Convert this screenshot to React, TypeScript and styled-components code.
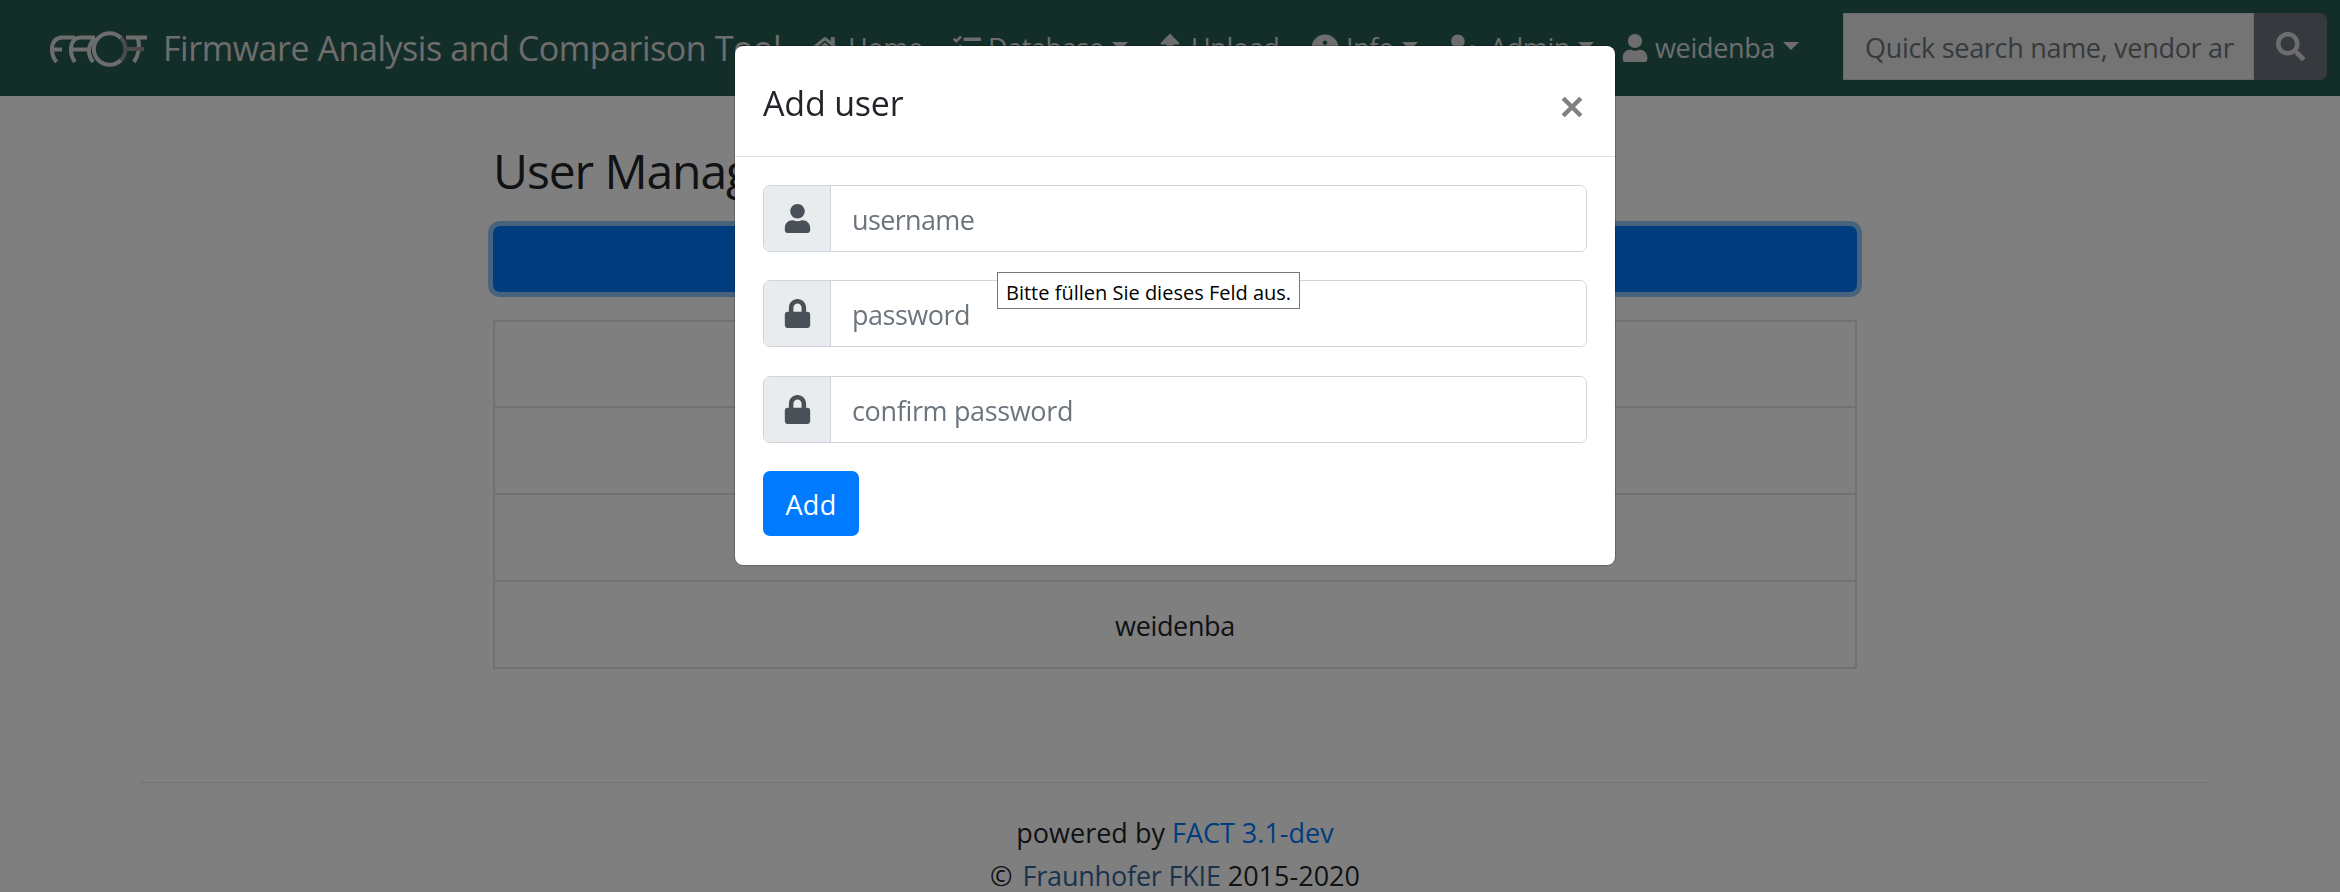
import React from 'react';
import styled, { createGlobalStyle } from 'styled-components';
import { FaHome, FaTasks, FaUpload, FaInfoCircle, FaUserCog, FaUser, FaSearch, FaLock } from 'react-icons/fa';

const Global = createGlobalStyle`
  *, *::before, *::after { box-sizing: border-box; }
  html, body { margin: 0; height: 892px; overflow: hidden; background: #fff; }
  body { font-family: "Open Sans", "Noto Sans", sans-serif; font-size: 27px; line-height: 42px; color: #212529; }
`;

const Page = styled.div`
  width: 2350px;
  height: 892px;
  overflow: hidden;
`;

const Navbar = styled.nav`
  display: flex;
  align-items: center;
  height: 96px;
  padding: 0 23px 1px 49px;
  background: #275c53;
`;

const Brand = styled.a`
  display: flex;
  align-items: center;
  width: 762px;
  gap: 13px;
  font-size: 34px;
  color: #dadada;
  white-space: nowrap;
  letter-spacing: -0.45px;
`;

const Logo = styled.svg`
  flex: none;
  width: 101px;
  height: 40px;
  margin-top: 3px;
`;

const NavItem = styled.a<{ $width: number; $gap?: number; $spacing?: number }>`
  display: flex;
  align-items: center;
  flex: none;
  width: ${(p) => p.$width}px;
  color: #dadada;
  white-space: nowrap;
  letter-spacing: ${(p) => p.$spacing ?? -0.4}px;
  svg { flex: none; margin-right: ${(p) => p.$gap ?? 7}px; }
`;

const Caret = styled.span`
  width: 0;
  height: 0;
  margin: 0 0 3px 8px;
  border: 8px solid transparent;
  border-top-color: currentColor;
  border-bottom: 0;
`;

const SearchGroup = styled.form`
  display: flex;
  width: 484px;
  height: 67px;
  margin: 0 0 2px auto;
`;

const SearchInput = styled.input`
  flex: 1;
  min-width: 0;
  padding: 2px 19px 0 21px;
  border: 1px solid #ced4da;
  border-radius: 0;
  background: #e8e8e8;
  font: inherit;
  letter-spacing: -0.3px;
  &::placeholder { color: #6c757d; opacity: 1; }
`;

const SearchButton = styled.button`
  display: flex;
  align-items: center;
  justify-content: center;
  width: 73px;
  border: 0;
  border-radius: 0 7px 7px 0;
  background: #6c757d;
  color: #dadada;
`;

const Content = styled.main`
  width: 1364px;
  margin: 0 auto;
  padding-top: 42px;
`;

const Title = styled.h3`
  margin: 0;
  height: 88px;
  font-size: 48px;
  font-weight: 400;
  line-height: 66px;
  letter-spacing: -1.1px;
`;

const OpenButton = styled.button`
  display: block;
  width: 100%;
  height: 66px;
  border: 0;
  border-radius: 7px;
  background: #007bff;
  box-shadow: 0 0 0 5px rgba(38, 143, 255, 0.5);
`;

const UserTable = styled.table`
  width: 100%;
  margin-top: 28px;
  border-collapse: collapse;
`;

const Cell = styled.td<{ $height?: number }>`
  height: ${(p) => p.$height ?? 87}px;
  padding: 2px 0 0;
  border: 2px solid #dee2e6;
  text-align: center;
  letter-spacing: -0.35px;
`;

const Footer = styled.footer`
  width: 2069px;
  margin: 113px auto 0;
  padding-top: 28px;
  border-top: 1px solid rgba(0, 0, 0, 0.1);
  text-align: center;
  line-height: 43px;
`;

const FooterLink = styled.a`
  color: #007bff;
`;

const InstituteLink = styled.a`
  margin-left: 3px;
  color: #336699;
  letter-spacing: -0.2px;
`;

const Backdrop = styled.div`
  position: fixed;
  inset: 0;
  background: rgba(0, 0, 0, 0.5);
`;

const Dialog = styled.div`
  position: absolute;
  top: 46px;
  left: 735px;
  width: 880px;
  height: 519px;
  border-radius: 8px;
  background: #fff;
  box-shadow: 0 0 0 1px rgba(0, 0, 0, 0.2);
`;

const DialogHeader = styled.header`
  display: flex;
  align-items: center;
  justify-content: space-between;
  height: 111px;
  padding: 0 32px 0 28px;
  border-bottom: 1px solid #dee2e6;
`;

const DialogTitle = styled.h5`
  margin: 4px 0 0;
  font-size: 34px;
  font-weight: 400;
  letter-spacing: -0.2px;
`;

const Close = styled.svg`
  width: 22px;
  height: 22px;
  margin-top: 12px;
`;

const DialogBody = styled.form`
  display: flex;
  flex-direction: column;
  gap: 28px;
  padding: 28px;
`;

const InputGroup = styled.label`
  display: flex;
  height: 67px;
  border: 1px solid #ced4da;
  border-radius: 7px;
  overflow: hidden;
  &:nth-of-type(2) { margin-bottom: 1px; }
`;

const Prepend = styled.span`
  display: flex;
  align-items: center;
  justify-content: center;
  width: 67px;
  border-right: 1px solid #ced4da;
  background: #e9ecef;
  color: #495057;
`;

const Field = styled.input<{ $spacing: number }>`
  flex: 1;
  padding: 2px 21px 0 21px;
  border: 0;
  font: inherit;
  letter-spacing: ${(p) => p.$spacing}px;
  &::placeholder { color: #6c757d; opacity: 1; }
`;

const AddButton = styled.button`
  align-self: flex-start;
  width: 96px;
  height: 65px;
  padding: 2px 0 0;
  border: 0;
  border-radius: 7px;
  background: #007bff;
  color: #fff;
  font: inherit;
  letter-spacing: 0.3px;
`;

const Tooltip = styled.div`
  position: absolute;
  top: 226px;
  left: 262px;
  width: 303px;
  height: 37px;
  padding-left: 8px;
  border: 1px solid #767676;
  background: #fff;
  color: #000;
  font-size: 20px;
  line-height: 39px;
  white-space: nowrap;
`;

const FactLogo = () => (
  <Logo viewBox="49 29 101 40" fill="none" stroke="#dadada" strokeWidth="4">
    <path d="M75 37.500H62Q53 38 52 48Q51.500 56 56.500 62M53 49.500H62" />
    <path d="M95 37.500H80Q72 38 71 48Q70.500 56 75 62M72 49.500H90M95 37.500Q84 50 93 62" />
    <path d="M126 37.500H147M138 38Q141 52 134 62" />
    <path d="M121 38A15.800 15.800 0 1 0 121 60" />
    <path d="M121 38A15.800 15.800 0 0 1 121 60M127 49H144" stroke="#969696" />
  </Logo>
);

export default function App() {
  return (
    <>
      <Global />
      <Page>
        <Navbar>
          <Brand><FactLogo />Firmware Analysis and Comparison Tool</Brand>
          <NavItem $width={142} $gap={9}><FaHome size={28} />Home</NavItem>
          <NavItem $width={203}><FaTasks size={28} />Database<Caret /></NavItem>
          <NavItem $width={155}><FaUpload size={28} />Upload</NavItem>
          <NavItem $width={135}><FaInfoCircle size={28} />Info<Caret /></NavItem>
          <NavItem $width={175} $gap={10}><FaUserCog size={34} />Admin<Caret /></NavItem>
          <NavItem $width={179} $gap={6} $spacing={-0.3}><FaUser size={28} />weidenba<Caret /></NavItem>
          <SearchGroup>
            <SearchInput placeholder="Quick search name, vendor and more" />
            <SearchButton type="button"><FaSearch size={29} /></SearchButton>
          </SearchGroup>
        </Navbar>
        <Content>
          <Title>User Management</Title>
          <OpenButton />
          <UserTable>
            <tbody>
              <tr><Cell $height={86} /></tr>
              <tr><Cell /></tr>
              <tr><Cell /></tr>
              <tr><Cell>weidenba</Cell></tr>
            </tbody>
          </UserTable>
        </Content>
        <Footer>
          <div>powered by <FooterLink>FACT 3.1-dev</FooterLink></div>
          <div>© <InstituteLink>Fraunhofer FKIE</InstituteLink> 2015-2020</div>
        </Footer>
      </Page>
      <Backdrop>
        <Dialog>
          <DialogHeader>
            <DialogTitle>Add user</DialogTitle>
            <Close viewBox="0 0 20 20" stroke="#808080" strokeWidth="4"><path d="M2 2L18 18M18 2L2 18" /></Close>
          </DialogHeader>
          <DialogBody>
            <InputGroup><Prepend><FaUser size={29} /></Prepend><Field $spacing={-0.65} placeholder="username" /></InputGroup>
            <InputGroup><Prepend><FaLock size={29} /></Prepend><Field $spacing={-0.5} placeholder="password" /></InputGroup>
            <InputGroup><Prepend><FaLock size={29} /></Prepend><Field $spacing={-0.35} placeholder="confirm password" /></InputGroup>
            <AddButton type="button">Add</AddButton>
          </DialogBody>
          <Tooltip>Bitte füllen Sie dieses Feld aus.</Tooltip>
        </Dialog>
      </Backdrop>
    </>
  );
}
